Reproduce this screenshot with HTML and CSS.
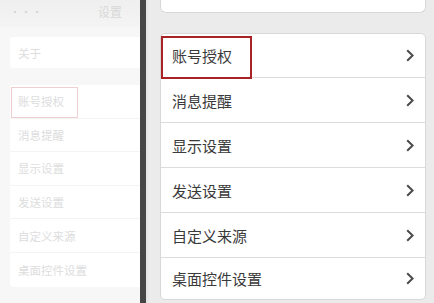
FILE: index.html
```html
<!DOCTYPE html>
<html lang="zh">
<head>
<meta charset="utf-8">
<link rel="stylesheet" href="styles.css">
</head>
<body>
<div class="screen">
  <div class="ghost">
    <div class="ghost-bar">
      <span class="ghost-dots">•••</span>
      <span class="ghost-title">设置</span>
    </div>
    <div class="ghost-card ghost-about"><div class="ghost-row">关于</div></div>
    <div class="ghost-card ghost-list">
      <div class="ghost-row ghost-first"><span class="ghost-mark"></span>账号授权</div>
      <div class="ghost-row">消息提醒</div>
      <div class="ghost-row">显示设置</div>
      <div class="ghost-row">发送设置</div>
      <div class="ghost-row">自定义来源</div>
      <div class="ghost-row ghost-last">桌面控件设置</div>
    </div>
  </div>
  <div class="split"></div>
  <div class="main">
    <div class="card card-top"></div>
    <div class="card card-list">
      <div class="row row-first"><span class="mark"></span><span class="label">账号授权</span><svg class="chev" viewBox="0 0 8 13"><path d="M1.2 1.2 L6.6 6.5 L1.2 11.8" fill="none" stroke="#4a4a4a" stroke-width="2"/></svg></div>
      <div class="row"><span class="label">消息提醒</span><svg class="chev" viewBox="0 0 8 13"><path d="M1.2 1.2 L6.6 6.5 L1.2 11.8" fill="none" stroke="#4a4a4a" stroke-width="2"/></svg></div>
      <div class="row"><span class="label">显示设置</span><svg class="chev" viewBox="0 0 8 13"><path d="M1.2 1.2 L6.6 6.5 L1.2 11.8" fill="none" stroke="#4a4a4a" stroke-width="2"/></svg></div>
      <div class="row"><span class="label">发送设置</span><svg class="chev" viewBox="0 0 8 13"><path d="M1.2 1.2 L6.6 6.5 L1.2 11.8" fill="none" stroke="#4a4a4a" stroke-width="2"/></svg></div>
      <div class="row"><span class="label">自定义来源</span><svg class="chev" viewBox="0 0 8 13"><path d="M1.2 1.2 L6.6 6.5 L1.2 11.8" fill="none" stroke="#4a4a4a" stroke-width="2"/></svg></div>
      <div class="row row-last"><span class="label">桌面控件设置</span><svg class="chev" viewBox="0 0 8 13"><path d="M1.2 1.2 L6.6 6.5 L1.2 11.8" fill="none" stroke="#4a4a4a" stroke-width="2"/></svg></div>
    </div>
  </div>
</div>
</body>
</html>
```
FILE: styles.css
```css
html, body {
  margin: 0;
  padding: 0;
}
body {
  width: 434px;
  height: 303px;
  overflow: hidden;
  font-family: "Noto Sans CJK SC", "Noto Sans", sans-serif;
  background: #ebebeb;
}
.screen {
  display: flex;
  height: 303px;
}
.ghost {
  width: 140px;
  flex: none;
  background: #f7f7f7;
  overflow: hidden;
}
.ghost-bar {
  height: 27px;
  background: linear-gradient(#efefef, #f4f4f4);
  display: flex;
  align-items: center;
  justify-content: space-between;
  padding: 0 18px 4px 10px;
  box-sizing: border-box;
  color: #d8d8d8;
}
.ghost-dots {
  font-size: 10px;
  letter-spacing: 1px;
  color: #d2d2d2;
}
.ghost-title {
  font-size: 12px;
}
.ghost-card {
  background: #ffffff;
  margin-left: 10px;
  width: 140px;
  border-radius: 3px;
}
.ghost-about {
  margin-top: 10px;
}
.ghost-list {
  margin-top: 17px;
}
.ghost-row {
  position: relative;
  height: 33.6px;
  box-sizing: border-box;
  border-bottom: 1px solid #f4f4f4;
  display: flex;
  align-items: center;
  padding-left: 8px;
  font-size: 11.5px;
  color: #dddddd;
}
.ghost-about .ghost-row {
  height: 31px;
  border-bottom: none;
}
.ghost-last {
  border-bottom: none;
}
.ghost-mark {
  position: absolute;
  left: 1px;
  top: 2px;
  width: 67px;
  height: 31px;
  box-sizing: border-box;
  border: 1px solid #efcfcf;
}
.split {
  width: 6px;
  flex: none;
  background: #454545;
}
.main {
  flex: 1;
  padding: 0 8px 0 14px;
  background: #ebebeb;
  box-shadow: inset 3px 0 2px -1px #e3e3e3;
}
.card {
  background: #ffffff;
  border: 1px solid #d8d8d8;
  border-radius: 5px;
}
.card-top {
  height: 12px;
  border-top: none;
  border-radius: 0 0 6px 6px;
}
.card-list {
  margin-top: 20px;
}
.row {
  position: relative;
  height: 45px;
  box-sizing: border-box;
  border-bottom: 1px solid #dcdcdc;
  display: flex;
  align-items: center;
  justify-content: space-between;
  padding: 0 11px 0 11px;
}
.row-first {
  height: 44px;
}
.row-last {
  height: 41px;
  border-bottom: none;
}
.label {
  font-size: 15px;
  color: #3a3a3a;
}
.chev {
  width: 8px;
  height: 13px;
}
.mark {
  position: absolute;
  left: 0;
  top: 2px;
  width: 91px;
  height: 43px;
  box-sizing: border-box;
  border: 2px solid #a82424;
}
```
